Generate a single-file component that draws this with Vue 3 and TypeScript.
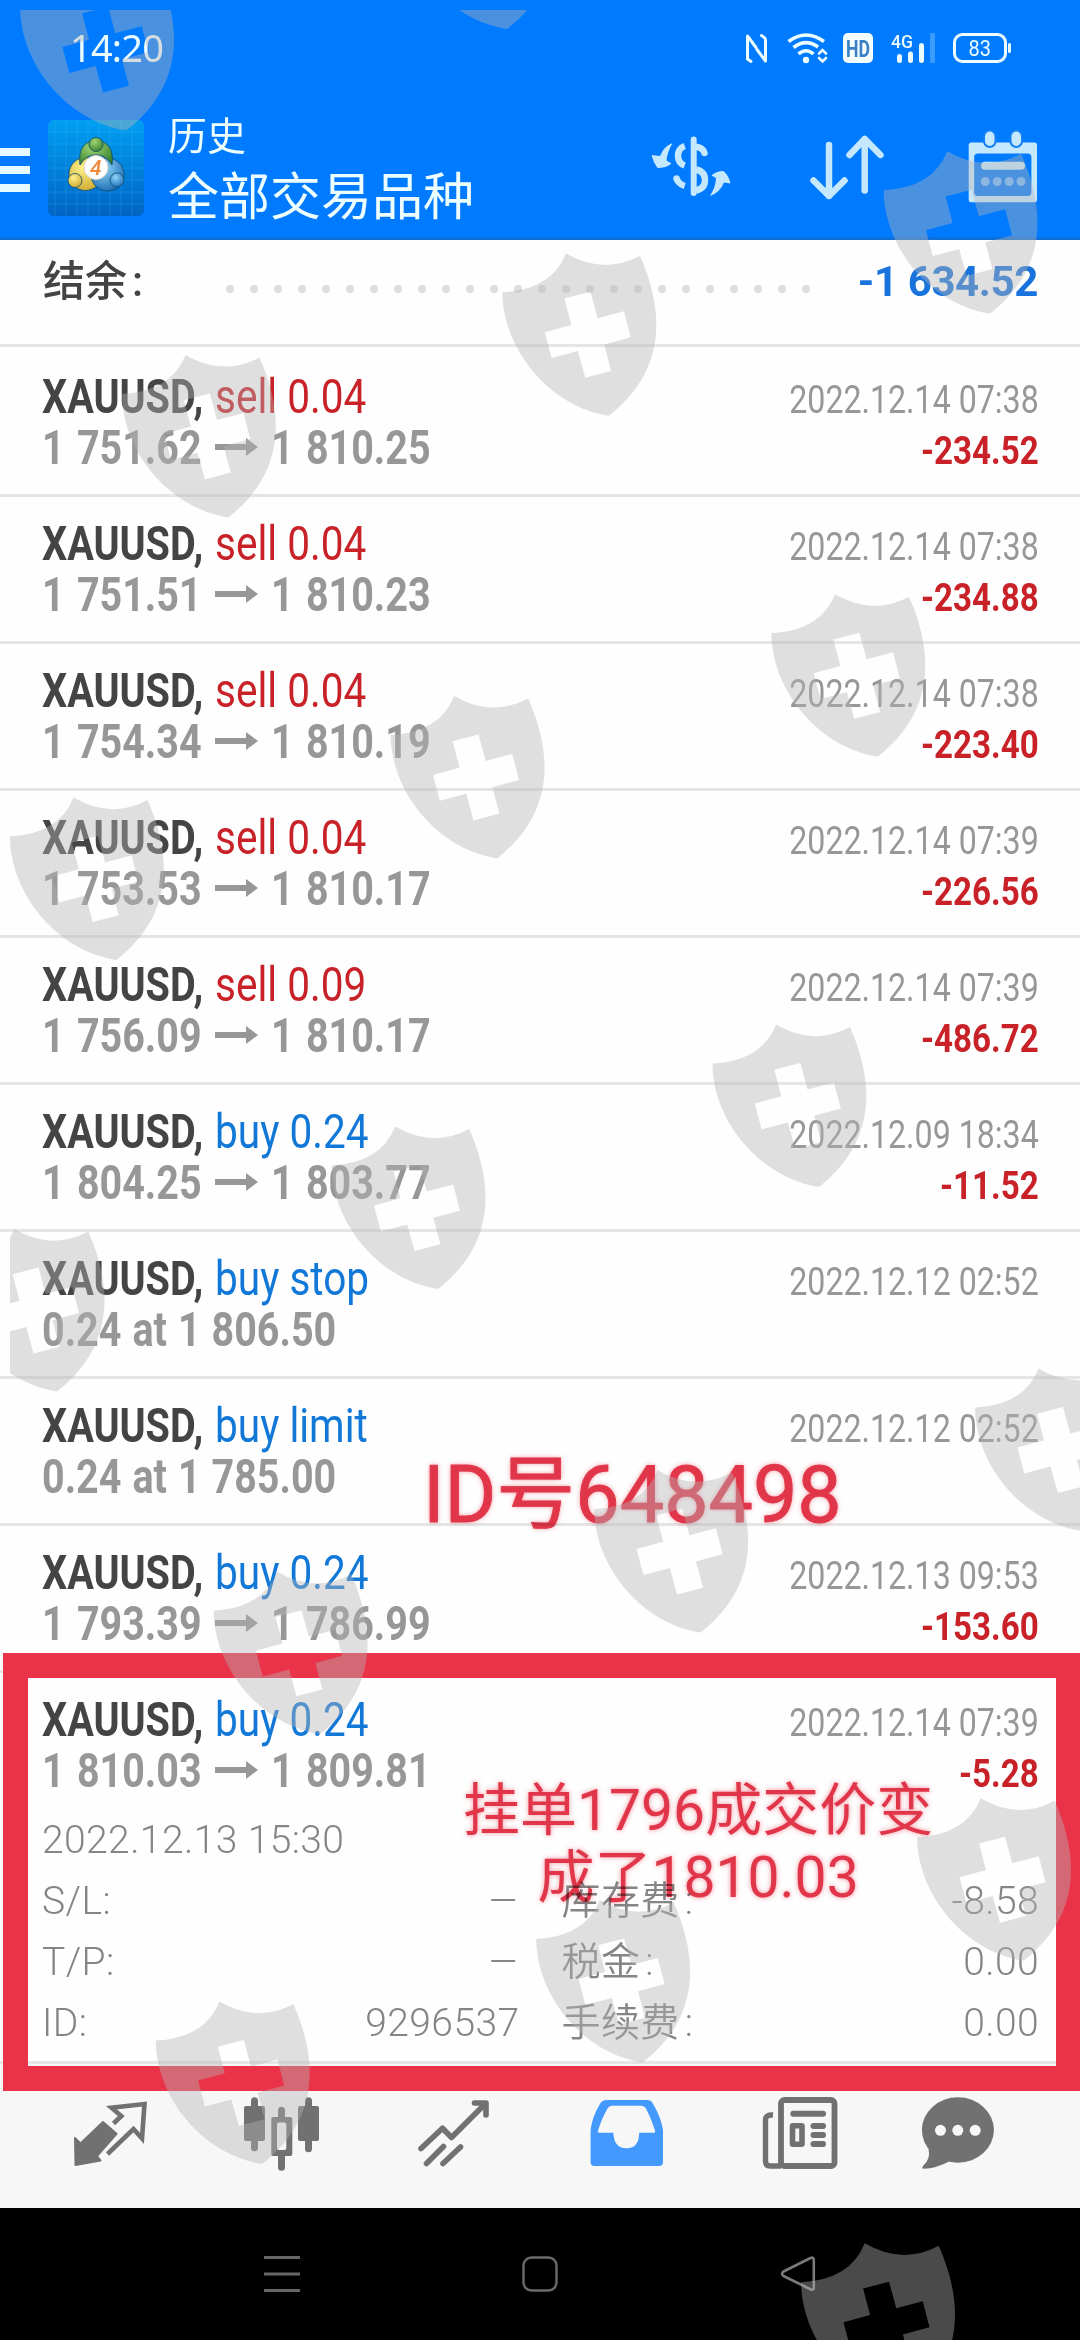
<script setup lang="ts">
interface Deal {
  side: 'sell' | 'buy'
  action: string
  from?: string
  to?: string
  order?: string
  time: string
  profit?: string
}

interface Point {
  x: number
  y: number
}

const symbol = 'XAUUSD,'

const deals: Deal[] = [
  { side: 'sell', action: 'sell 0.04', from: '1 751.62', to: '1 810.25', time: '2022.12.14 07:38', profit: '-234.52' },
  { side: 'sell', action: 'sell 0.04', from: '1 751.51', to: '1 810.23', time: '2022.12.14 07:38', profit: '-234.88' },
  { side: 'sell', action: 'sell 0.04', from: '1 754.34', to: '1 810.19', time: '2022.12.14 07:38', profit: '-223.40' },
  { side: 'sell', action: 'sell 0.04', from: '1 753.53', to: '1 810.17', time: '2022.12.14 07:39', profit: '-226.56' },
  { side: 'sell', action: 'sell 0.09', from: '1 756.09', to: '1 810.17', time: '2022.12.14 07:39', profit: '-486.72' },
  { side: 'buy', action: 'buy 0.24', from: '1 804.25', to: '1 803.77', time: '2022.12.09 18:34', profit: '-11.52' },
  { side: 'buy', action: 'buy stop', order: '0.24 at 1 806.50', time: '2022.12.12 02:52' },
  { side: 'buy', action: 'buy limit', order: '0.24 at 1 785.00', time: '2022.12.12 02:52' },
  { side: 'buy', action: 'buy 0.24', from: '1 793.39', to: '1 786.99', time: '2022.12.13 09:53', profit: '-153.60' },
  { side: 'buy', action: 'buy 0.24', from: '1 810.03', to: '1 809.81', time: '2022.12.14 07:39', profit: '-5.28' }
]

const openedIndex = deals.length - 1

const details = [
  { label: 'S/L:', value: '–', label2: '库存费', value2: '-8.58' },
  { label: 'T/P:', value: '–', label2: '税金', value2: '0.00' },
  { label: 'ID:', value: '9296537', label2: '手续费', value2: '0.00' }
]

const dotCount = 25

// 水印盾牌中心点
const shields: Point[] = [
  { x: 105.5, y: 49.6 },
  { x: 486, y: -52 },
  { x: 969, y: 232.7 },
  { x: 587.8, y: 334.7 },
  { x: 207.3, y: 436.4 },
  { x: 856.8, y: 675.7 },
  { x: 476, y: 777.4 },
  { x: 95.3, y: 879 },
  { x: 797.8, y: 1106 },
  { x: 417, y: 1208 },
  { x: 36, y: 1310.5 },
  { x: 1060.4, y: 1450 },
  { x: 679.6, y: 1551.6 },
  { x: 299, y: 1653.2 },
  { x: 1002.5, y: 1879.7 },
  { x: 621.6, y: 1981.5 },
  { x: 241.2, y: 2083 },
  { x: 886.5, y: 2324.7 }
]
</script>

<template>
  <div class="screen">
    <header class="header">
      <div class="status-bar">
        <span class="clock">14:20</span>
        <svg class="status-icons" viewBox="740 20 280 56" fill="none" stroke="#eafcff" stroke-linecap="round">
          <g stroke-width="3" stroke-linejoin="round">
            <path d="M751 61.500L747.500 59V36L756 47.500M757 49.500L765.500 61V39.500Q765 37.500 761.500 35.500" />
          </g>
          <g stroke-width="3.600" stroke-linecap="butt">
            <path d="M788.500 41.500Q806 28.500 824 41.500" />
            <path d="M793.500 47.500Q806 38 818 47" />
            <path d="M798.500 54Q806 47.500 813.500 54" />
          </g>
          <circle cx="806" cy="60" r="3.200" fill="#eafcff" stroke="none" />
          <path d="M819 53.500L822.500 50L826 53.500M819 58L822.500 61.500L826 58" stroke-width="2.600" />
          <rect x="843" y="33" width="30" height="30" rx="5" fill="#f4fdff" stroke="none" />
          <text x="846" y="56.500" class="hd" textLength="24" lengthAdjust="spacingAndGlyphs">HD</text>
          <text x="891" y="47.500" class="net" textLength="22" lengthAdjust="spacingAndGlyphs">4G</text>
          <g stroke-width="5">
            <path d="M899.500 56.500V60.500M910.500 54V60.500M921.500 45.500V60.500" />
            <path d="M932.500 33V63" stroke="#3b9cff" stroke-linecap="butt" />
          </g>
          <rect x="954.500" y="34.500" width="51" height="27" rx="8" stroke-width="3" />
          <path d="M1009.500 44.500V51.500" stroke-width="3" />
          <text x="968.500" y="55.500" class="battery" textLength="22.500" lengthAdjust="spacingAndGlyphs">83</text>
        </svg>
      </div>

      <div class="app-bar">
        <div class="menu">
          <i></i>
          <i></i>
          <i></i>
        </div>
        <svg class="logo" viewBox="0 0 96 96">
          <defs>
            <linearGradient id="logoBg" x1="0" y1="0" x2="0" y2="1">
              <stop offset="0" stop-color="#009ff2" />
              <stop offset="1" stop-color="#0064c4" />
            </linearGradient>
            <radialGradient id="green" cx="0.4" cy="0.3" r="0.8">
              <stop offset="0" stop-color="#a5d873" />
              <stop offset="1" stop-color="#2d7a2c" />
            </radialGradient>
            <radialGradient id="gold" cx="0.4" cy="0.3" r="0.8">
              <stop offset="0" stop-color="#fff08a" />
              <stop offset="1" stop-color="#c9a52a" />
            </radialGradient>
            <radialGradient id="blue" cx="0.4" cy="0.3" r="0.8">
              <stop offset="0" stop-color="#8fd3f7" />
              <stop offset="1" stop-color="#1466b0" />
            </radialGradient>
          </defs>
          <rect width="96" height="96" rx="6" fill="url(#logoBg)" />
          <path
            d="M7 0V96M18 0V96M29 0V96M40 0V96M51 0V96M62 0V96M73 0V96M84 0V96M0 12H96M0 24H96M0 36H96M0 48H96M0 60H96M0 72H96M0 84H96"
            stroke="#5ac8f5" stroke-width="0.800" opacity="0.25"
          />
          <g stroke="#0b4a6e" stroke-width="0.800">
            <circle cx="37.500" cy="54" r="16.500" fill="url(#gold)" />
            <circle cx="59.500" cy="54.500" r="16.500" fill="url(#blue)" />
            <path d="M32 45Q29 22 48 20Q67 22 64 45Q57 34 48 35Q39 34 32 45Z" fill="url(#green)" />
            <circle cx="48" cy="24.500" r="7" fill="url(#green)" />
            <circle cx="27" cy="60.500" r="7" fill="url(#gold)" />
            <circle cx="69" cy="60" r="7" fill="url(#blue)" />
          </g>
          <circle cx="48" cy="47.500" r="12" fill="#fff" stroke="#d9d5c8" />
          <text x="42" y="55" class="logo-num">4</text>
        </svg>
        <div class="titles">
          <div class="title-small">历史</div>
          <div class="title-main">全部交易品种</div>
        </div>
        <div class="actions">
          <svg class="act-currency" viewBox="0 0 100 100" fill="none" stroke="#c6e8ff" stroke-width="6.500">
            <path d="M52.700 19.500V73" stroke-width="6" stroke-linecap="round" />
            <path d="M43.700 26Q37 28.500 37 36Q37 43 43.700 45.500" />
            <path d="M43.700 66Q37.500 64 35.500 58.500" />
            <circle cx="35.500" cy="58.500" r="3.200" fill="#c6e8ff" stroke="none" />
            <path d="M56 27Q62 28 63.500 33" stroke-linecap="round" />
            <path d="M55 49.500Q64 51.500 64 60Q64 68.500 55 70.500" />
            <g fill="#c6e8ff" stroke="none">
              <path d="M10.500 35L19 36Q23 26 31.500 23Q26 33 25.500 40.500L30.500 43.500Q25 48 16.500 48Q12 42 10.500 35Z" />
              <path d="M89.500 63.500L83 62.500Q79 72.500 69 76Q75 66 75 58L70.500 55.500Q75 51 82.500 51Q88 56 89.500 63.500Z" />
            </g>
          </svg>
          <svg class="act-sort" viewBox="0 0 90 100" fill="none" stroke="#c6e8ff" stroke-width="6.500" stroke-linecap="round" stroke-linejoin="round">
            <path d="M28 25V76M12.500 60.500L28 76L43.500 60.500" />
            <path d="M63.700 70.500V19M48.500 35L63.700 19L79.500 35" />
          </svg>
          <svg class="act-calendar" viewBox="0 0 90 100">
            <path
              d="M10 22.500H73.500Q76 22.500 76 25V80Q76 82.300 73.500 82.300H10Q7.700 82.300 7.700 80V25Q7.700 22.500 10 22.500ZM17 33.500Q13.200 33.500 13.200 37V72.500Q13.200 76 17 76H66.500Q70.400 76 70.400 72.500V37Q70.400 33.500 66.500 33.500Z"
              fill="#c6e8ff" fill-rule="evenodd"
            />
            <rect x="23" y="10.500" width="11.500" height="16.500" rx="5.700" fill="#c6e8ff" stroke="#1380f5" stroke-width="2" />
            <rect x="49.500" y="10.500" width="11.500" height="16.500" rx="5.700" fill="#c6e8ff" stroke="#1380f5" stroke-width="2" />
            <path d="M24 45.700H60" stroke="#c6e8ff" stroke-width="8" stroke-linecap="round" />
            <g fill="#6fb8ff">
              <circle cx="24.200" cy="61.500" r="4.500" />
              <circle cx="36.200" cy="61.500" r="4.500" />
              <circle cx="48.200" cy="61.500" r="4.500" />
              <circle cx="60" cy="61.500" r="4.500" />
            </g>
          </svg>
        </div>
      </div>
    </header>

    <section class="balance">
      <span class="balance-label">结余<span class="colon">:</span></span>
      <span class="dots"><i v-for="n in dotCount" :key="n"></i></span>
      <span class="balance-value">-1 634.52</span>
    </section>

    <main class="list">
      <article v-for="(deal, index) in deals" :key="index" class="deal" :class="{ opened: index === openedIndex }">
        <div class="deal-head">
          <div class="deal-left">
            <div class="deal-title">
              <span class="symbol"><b>{{ symbol }}</b></span>
              <span class="action" :class="deal.side">{{ deal.action }}</span>
            </div>
            <div v-if="deal.order" class="prices">
              <span class="price order">{{ deal.order }}</span>
            </div>
            <div v-else class="prices">
              <span class="from"><span class="price">{{ deal.from }}</span></span>
              <svg class="arrow" viewBox="0 0 43 18">
                <path d="M0 6H31V0L43 9L31 18V12H0Z" fill="#979797" />
              </svg>
              <span class="price">{{ deal.to }}</span>
            </div>
          </div>
          <div class="deal-right">
            <div class="time">{{ deal.time }}</div>
            <div class="profit">{{ deal.profit }}</div>
          </div>
        </div>
        <div v-if="index === openedIndex" class="details">
          <div class="open-time">2022.12.13 15:30</div>
          <div v-for="row in details" :key="row.label" class="detail-row">
            <div class="cell">
              <span>{{ row.label }}</span>
              <span :class="{ dash: row.value === '–' }">{{ row.value }}</span>
            </div>
            <div class="cell">
              <span>{{ row.label2 }}<span class="colon">:</span></span>
              <span>{{ row.value2 }}</span>
            </div>
          </div>
        </div>
      </article>
    </main>

    <nav class="tabs">
      <svg viewBox="0 0 172 116" fill="#717171">
        <path d="M89.500 31.500L97.300 24L87.500 15.700L120.500 12L118 46.500L109.500 37L83.500 62" fill="none" stroke="#717171" stroke-width="4.600" />
        <path d="M79 30L92.500 41.800L73 64L76.500 68.500L51.500 73L51 46L56.500 51.500Z" stroke="#717171" stroke-width="2" stroke-linejoin="round" />
      </svg>
      <svg viewBox="0 0 172 116" fill="#717171">
        <rect x="48" y="14" width="21" height="35" rx="2" />
        <rect x="55" y="5.300" width="7" height="54" rx="3.500" />
        <rect x="102" y="14" width="21" height="35" rx="2" />
        <rect x="109" y="5.300" width="7" height="55" rx="3.500" />
        <rect x="75.300" y="25" width="21" height="39" rx="2" />
        <rect x="82" y="14.700" width="7" height="64" rx="3.500" />
        <rect x="81" y="30.500" width="9.300" height="27.500" rx="2" fill="#f7f7f7" />
      </svg>
      <svg viewBox="0 0 172 116" fill="none" stroke="#717171" stroke-width="5.600" stroke-linecap="round" stroke-linejoin="round">
        <path d="M53 56.500L74.500 36.300L83.500 45.500L117.500 11.500M106.500 11H118V23" />
        <path d="M58.500 71.500L75.500 54.500M75 71.500L92.500 55" />
      </svg>
      <svg viewBox="0 0 172 116">
        <path
          d="M67 8H107Q111 8 112.500 11Q121 25 123 38V70Q123 74 119 74H54.500Q50.600 74 50.600 70V38Q52 25 60.500 11Q62.500 8 67 8ZM72 13.700Q69 13.700 67.500 16.500Q62 26 58 38.500Q57.300 40.700 59.500 40.700H73.300Q74 56.300 86.500 56.300Q99 56.300 99.200 40.700H113.500Q115.800 40.700 115 38.500Q111 26 106 16.500Q104.500 13.700 101.500 13.700Z"
          fill="#4499ff" fill-rule="evenodd"
        />
      </svg>
      <svg viewBox="0 0 172 116" fill="none" stroke="#717171">
        <path d="M61 23Q53.500 22.500 53.500 28V69Q53.500 74 58 74H69" stroke-width="5.400" />
        <rect x="69" y="8" width="53.500" height="66" rx="3.500" stroke-width="5.800" />
        <path d="M81.300 21.800H111" stroke-width="6" stroke-linecap="round" />
        <rect x="80.500" y="33.700" width="9.500" height="18.500" rx="0.500" stroke-width="5.600" />
        <path d="M101.500 34H111M101.500 43H111M101.500 52H111" stroke-width="6" stroke-linecap="round" />
      </svg>
      <svg viewBox="0 0 172 116" fill="#717171">
        <ellipse cx="73.900" cy="38" rx="36" ry="32.700" />
        <path d="M44.500 57Q47 67 39 74Q37 76.800 40 76.800Q52 76.500 66 69Z" />
        <g fill="#f7f7f7">
          <circle cx="56.500" cy="38.300" r="5.500" />
          <circle cx="73.800" cy="38.300" r="5.500" />
          <circle cx="91.200" cy="38.300" r="5.500" />
        </g>
      </svg>
    </nav>

    <footer class="system-nav">
      <svg viewBox="153 2208 258 132" stroke="#666" stroke-width="3">
        <path d="M264 2257.500H300M264 2274H300M264 2290.500H300" />
      </svg>
      <svg viewBox="411 2208 258 132" fill="none" stroke="#6a6a6a" stroke-width="2.400">
        <rect x="523.500" y="2257.500" width="33" height="33" rx="8" />
      </svg>
      <svg viewBox="669 2208 258 132" fill="none" stroke="#7a7a7a" stroke-width="2.600" stroke-linejoin="round">
        <path d="M783.500 2271.500L810.500 2258Q813.800 2256.800 813.800 2260V2287.500Q813.800 2290.500 811 2289.500L783.500 2276Q780.500 2273.700 783.500 2271.500Z" />
      </svg>
    </footer>

    <!-- 标注 -->
    <div class="mark-frame"></div>
    <div class="mark mark-id">ID号648498</div>
    <div class="mark mark-note">挂单1796成交价变<br />成了1810.03</div>

    <!-- 水印 -->
    <svg class="watermark" viewBox="0 0 1080 2340">
      <defs>
        <clipPath id="wmClip">
          <rect x="10" y="10" width="1070" height="2330" />
        </clipPath>
        <path
          id="shield"
          fill-rule="evenodd"
          d="M-85.400 -42.400Q-36 -45 -21.800 -81.400Q16 -59.500 52.200 -79C76 -25 80 35 21 81C-38 72 -85 15 -85.400 -42.400ZM-23.400 -36.200L2.500 -43L9.800 -16.400L36.200 -23.400L43 2.500L16.400 9.800L23.400 36.200L-2.500 43L-9.800 16.400L-36.200 23.400L-43 -2.500L-16.400 -9.800Z"
        />
      </defs>
      <g clip-path="url(#wmClip)" fill="#b4b4b4" fill-opacity="0.41">
        <use v-for="(s, i) in shields" :key="i" href="#shield" :x="s.x" :y="s.y" />
      </g>
    </svg>
  </div>
</template>

<style>
body {
  margin: 0;
  background: #fff;
}
</style>

<style scoped>
.screen {
  position: relative;
  width: 1080px;
  height: 2340px;
  overflow: hidden;
  background: #fefefe;
  font-family: Roboto, "Noto Sans CJK SC", sans-serif;
  display: flex;
  flex-direction: column;
}

svg {
  display: block;
}

.header {
  box-sizing: border-box;
  height: 240px;
  background: #007aff;
  border-bottom: 3px solid #0d6fd8;
}

.status-bar {
  height: 96px;
  display: flex;
  justify-content: space-between;
  padding: 0 60px 0 70px;
}

.clock {
  font-size: 38px;
  line-height: 94px;
  letter-spacing: -0.8px;
  color: #eafcff;
  font-family: "Noto Sans", sans-serif;
}

.status-icons {
  width: 280px;
  height: 56px;
  margin-top: 20px;
}

.hd {
  font-size: 23px;
  font-weight: 700;
  fill: #3b7fc4;
  stroke: none;
}

.net {
  font-size: 19px;
  font-weight: 500;
  fill: #eafcff;
  stroke: none;
}

.battery {
  font-size: 21.500px;
  fill: #eafcff;
  stroke: none;
}

.app-bar {
  display: flex;
  height: 141px;
}

.menu {
  width: 30px;
  display: flex;
  flex-direction: column;
  gap: 10px;
  padding-top: 52px;
}

.menu i {
  height: 8px;
  background: #e6fbff;
}

.logo {
  width: 96px;
  height: 96px;
  margin: 24px 24px 0 18px;
}

.logo-num {
  font-size: 21px;
  font-style: italic;
  font-weight: 500;
  fill: #f08a3c;
}

.titles {
  padding-top: 15px;
  color: #ecfeff;
  font-family: "Noto Sans CJK SC", sans-serif;
}

.title-small {
  font-size: 39px;
  line-height: 44px;
}

.title-main {
  margin-top: 8px;
  font-size: 51px;
  line-height: 60px;
  white-space: nowrap;
}

.actions {
  display: flex;
  margin: 24px 29px 0 auto;
}

.actions svg {
  height: 100px;
}

.act-currency {
  width: 100px;
}

.act-sort {
  width: 90px;
  margin: 0 70px 0 60px;
}

.act-calendar {
  width: 90px;
}

.balance {
  box-sizing: border-box;
  height: 107px;
  border-bottom: 3px solid #e5e5e5;
  display: flex;
  align-items: flex-start;
  padding: 12px 42px 0 43px;
  font-size: 42px;
  line-height: 60px;
}

.balance-label {
  width: 183px;
  font-weight: 500;
  color: #444;
}

.colon {
  margin-left: 5px;
}

.dots {
  display: flex;
  gap: 16px;
  padding-top: 33px;
}

.dots i {
  width: 8px;
  height: 8px;
  border-radius: 50%;
  background: #dedede;
}

.balance-value {
  margin-left: auto;
  font-weight: 700;
  letter-spacing: -0.4px;
  color: #1874dc;
}

.list {
  height: 1717px;
}

.deal {
  box-sizing: border-box;
  height: 147px;
  padding: 21px 41px 0 42px;
  border-bottom: 3px solid #e5e5e5;
}

.deal:first-child {
  height: 150px;
  padding-top: 24px;
}

.deal.opened {
  height: 391px;
}

.deal-head {
  display: flex;
  justify-content: space-between;
}

.deal-title,
.prices {
  display: flex;
  height: 51px;
  font-size: 48px;
  line-height: 51px;
  white-space: nowrap;
}

.symbol {
  width: 173px;
  color: #444;
}

.symbol b {
  display: inline-block;
  font-weight: 700;
  transform: scaleX(0.825);
  transform-origin: left;
}

.action {
  transform: scaleX(0.845);
  transform-origin: left;
}

.sell {
  color: #c82127;
}

.buy {
  color: #1278d8;
}

.prices {
  color: #979797;
}

.from {
  width: 173px;
}

.price {
  display: inline-block;
  font-weight: 700;
  word-spacing: 3px;
  transform: scaleX(0.822);
  transform-origin: left;
}

.price.order {
  word-spacing: 1.5px;
}

.arrow {
  width: 43px;
  height: 18px;
  margin: 16px 13px 0 0;
}

.deal-right {
  padding-top: 4px;
  text-align: right;
  font-size: 39px;
  line-height: 51px;
}

.time {
  color: #979797;
  transform: scaleX(0.824);
  transform-origin: right;
}

.profit {
  font-weight: 700;
  color: #c82127;
  transform: scaleX(0.85);
  transform-origin: right;
}

.details {
  padding-top: 10px;
  font-size: 39px;
  font-weight: 350;
  letter-spacing: 0.4px;
  line-height: 61px;
  color: #858585;
}

.detail-row {
  display: flex;
  gap: 42px;
}

.cell {
  flex: 1;
  display: flex;
  justify-content: space-between;
}

.dash {
  transform: scaleX(1.25);
  transform-origin: right;
}

.tabs {
  box-sizing: border-box;
  height: 144px;
  padding: 28px 24px 0;
  background: #f7f7f7;
  display: flex;
}

.tabs svg {
  width: 172px;
  height: 116px;
}

.system-nav {
  height: 132px;
  background: #000;
  display: flex;
  justify-content: center;
}

.system-nav svg {
  width: 258px;
  height: 132px;
}

.mark-frame {
  position: absolute;
  box-sizing: border-box;
  left: 3px;
  top: 1653px;
  width: 1077px;
  height: 438px;
  border: 25px solid #ea3348;
  border-right-width: 24px;
}

.mark {
  position: absolute;
  color: #e2364a;
  text-align: center;
  white-space: nowrap;
  text-shadow: 0 0 5px rgba(234, 51, 72, 0.55);
  mix-blend-mode: multiply;
}

.mark-id {
  left: 423px;
  top: 1445px;
  font-size: 79px;
  line-height: 100px;
  -webkit-text-stroke: 0.8px #e2364a;
}

.mark-note {
  left: 463px;
  top: 1777px;
  font-size: 57px;
  line-height: 67px;
}

.watermark {
  position: absolute;
  left: 0;
  top: 0;
  width: 1080px;
  height: 2340px;
  pointer-events: none;
}
</style>
